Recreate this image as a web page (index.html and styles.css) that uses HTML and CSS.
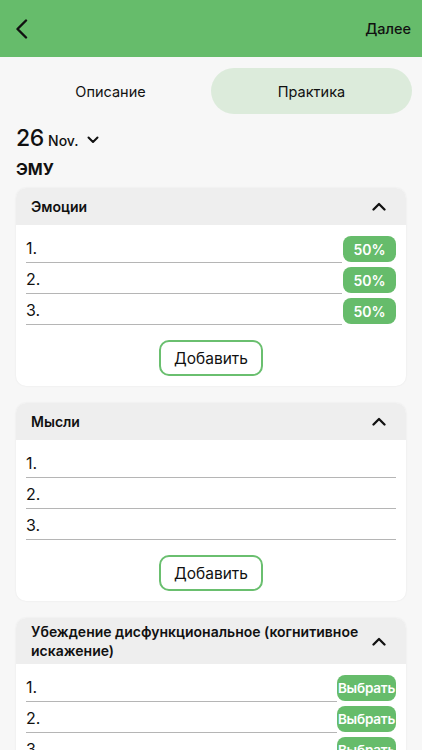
FILE: index.html
```html
<!DOCTYPE html>
<html lang="ru">
<head>
<meta charset="utf-8">
<link rel="stylesheet" href="styles.css">
</head>
<body>
<header class="topbar">
  <svg class="back" width="14" height="20" viewBox="0 0 14 20"><path d="M11 1.5 L2.5 10 L11 18.5" fill="none" stroke="#111" stroke-width="2.4" stroke-linecap="round" stroke-linejoin="round"/></svg>
  <span class="next">Далее</span>
</header>
<nav class="tabs">
  <div class="tab">Описание</div>
  <div class="tab active">Практика</div>
</nav>
<div class="date">
  <span class="day">26</span><span class="month">Nov.</span>
  <svg class="date-chev" width="12" height="8" viewBox="0 0 12 8"><path d="M1.5 1.5 L6 6 L10.5 1.5" fill="none" stroke="#111" stroke-width="2" stroke-linecap="round" stroke-linejoin="round"/></svg>
</div>
<div class="section">ЭМУ</div>

<section class="card">
  <div class="card-head">
    <span class="card-title">Эмоции</span>
    <svg class="up" width="14" height="9" viewBox="0 0 14 9"><path d="M1.5 7.5 L7 2 L12.5 7.5" fill="none" stroke="#111" stroke-width="2.3" stroke-linecap="round" stroke-linejoin="round"/></svg>
  </div>
  <div class="card-body">
    <div class="row"><div class="field">1.</div><span class="pill pct">50%</span></div>
    <div class="row"><div class="field">2.</div><span class="pill pct">50%</span></div>
    <div class="row"><div class="field">3.</div><span class="pill pct">50%</span></div>
    <div class="add-wrap"><span class="add">Добавить</span></div>
  </div>
</section>

<section class="card">
  <div class="card-head">
    <span class="card-title">Мысли</span>
    <svg class="up" width="14" height="9" viewBox="0 0 14 9"><path d="M1.5 7.5 L7 2 L12.5 7.5" fill="none" stroke="#111" stroke-width="2.3" stroke-linecap="round" stroke-linejoin="round"/></svg>
  </div>
  <div class="card-body">
    <div class="row"><div class="field">1.</div></div>
    <div class="row"><div class="field">2.</div></div>
    <div class="row"><div class="field">3.</div></div>
    <div class="add-wrap"><span class="add">Добавить</span></div>
  </div>
</section>

<section class="card">
  <div class="card-head tall">
    <span class="card-title">Убеждение дисфункциональное (когнитивное искажение)</span>
    <svg class="up" width="14" height="9" viewBox="0 0 14 9"><path d="M1.5 7.5 L7 2 L12.5 7.5" fill="none" stroke="#111" stroke-width="2.3" stroke-linecap="round" stroke-linejoin="round"/></svg>
  </div>
  <div class="card-body">
    <div class="row"><div class="field">1.</div><span class="pill pick">Выбрать</span></div>
    <div class="row"><div class="field">2.</div><span class="pill pick">Выбрать</span></div>
    <div class="row"><div class="field">3.</div><span class="pill pick">Выбрать</span></div>
  </div>
</section>
</body>
</html>
```

FILE: styles.css
```css
* { box-sizing: border-box; }
html, body { margin: 0; padding: 0; }
body {
  background: #f7f7f7;
  font-family: Inter, "Noto Sans", "DejaVu Sans", sans-serif;
  color: #111;
  width: 422px;
  height: 750px;
  overflow: hidden;
}
.topbar {
  height: 57px;
  background: #66bc6b;
  display: flex;
  align-items: center;
  justify-content: space-between;
  padding: 0 11px 0 15px;
}
.back { display: block; margin-top: 1px; }
.next { font-size: 14.5px; font-weight: 500; color: #111; }

.tabs {
  display: grid;
  grid-template-columns: 1fr 1fr;
  margin: 11px 10px 0 10px;
  height: 46px;
}
.tab {
  display: flex;
  align-items: center;
  justify-content: center;
  font-size: 14.5px;
  font-weight: 400;
  border-radius: 23px;
  color: #111;
}
.tab.active { background: #dcebdb; }

.date {
  display: flex;
  align-items: baseline;
  padding: 10px 16px 0;
  height: 38px;
}
.day { font-size: 23px; font-weight: 500; letter-spacing: -0.3px; }
.month { font-size: 14px; font-weight: 500; margin-left: 4px; }
.date-chev { margin-left: 8px; align-self: center; margin-top: 3px; }

.section {
  font-size: 16px;
  font-weight: 700;
  padding: 7px 16px 0;
  height: 36px;
}

.card {
  margin: 0 16px 17px;
  background: #fff;
  border-radius: 10px;
  overflow: hidden;
  box-shadow: 0 0 2px rgba(0,0,0,0.08);
}
.card-head {
  height: 37px;
  background: #eeeeee;
  display: flex;
  align-items: center;
  justify-content: space-between;
  padding: 0 20px 0 15px;
}
.card-head.tall { height: 46px; }
.card-title {
  font-size: 14px;
  font-weight: 600;
  line-height: 19px;
  padding-right: 12px;
}
.up { flex: none; }

.card-body {
  padding: 11px 10px 10px;
  display: flex;
  flex-direction: column;
  gap: 5px;
}
.row {
  display: flex;
  align-items: flex-end;
  height: 26px;
}
.field {
  flex: 1;
  height: 27px;
  border-bottom: 1.5px solid #b5b5b5;
  font-size: 16px;
  line-height: 24px;
  color: #111;
  margin-bottom: -1px;
}
.pill {
  flex: none;
  height: 26px;
  border-radius: 8px;
  background: #66bc6b;
  color: #fff;
  display: flex;
  align-items: center;
  justify-content: center;
  font-weight: 600;
  font-size: 14px;
}
.pct { width: 53px; margin-left: 1px; }
.pick { width: 59px; font-size: 13.5px; letter-spacing: -0.2px; }

.add-wrap {
  display: flex;
  justify-content: center;
  padding-top: 11px;
}
.add {
  width: 104px;
  height: 36px;
  border: 2.5px solid #6abf6f;
  border-radius: 10px;
  display: flex;
  align-items: center;
  justify-content: center;
  font-size: 15.5px;
  color: #111;
}
```
